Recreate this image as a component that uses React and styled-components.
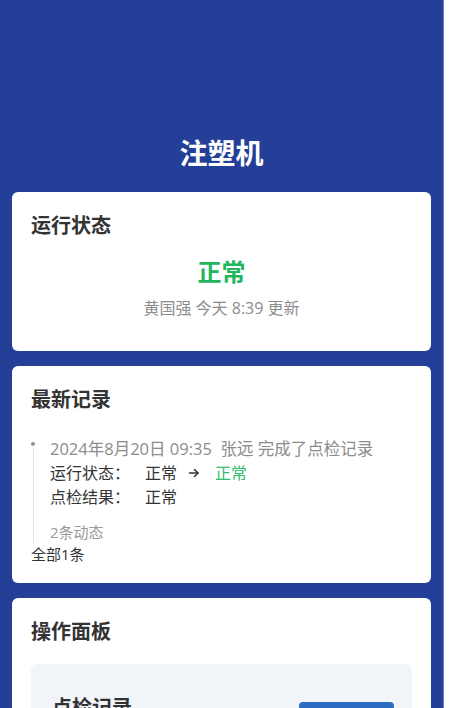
import React from 'react';
import styled, {createGlobalStyle} from 'styled-components';

const GlobalStyle = createGlobalStyle`
  html, body {
    margin: 0;
    padding: 0;
    background: #ffffff;
  }

  body {
    font-family: "Open Sans", "Noto Sans CJK SC", sans-serif;
    color: #333333;
  }
`;

const records = [
    {
        time: '2024年8月20日 09:35',
        user: '张远',
        action: '完成了点检记录',
        status: {from: '正常', to: '正常'},
        result: '正常',
    },
];

const ArrowIcon = () => (
    <svg width="12" height="12" viewBox="0 0 12 12" fill="none" stroke="#333" strokeWidth="1.5"
         strokeLinecap="round" strokeLinejoin="round">
        <path d="M1.5 6h8.5"/>
        <path d="M6.5 2.5L10 6l-3.5 3.5"/>
    </svg>
);

const App = () => {
    return (
        <>
            <GlobalStyle/>
            <Page>
                <Header>注塑机</Header>

                <Card>
                    <CardTitle>运行状态</CardTitle>
                    <StatusBlock>
                        <StatusValue>正常</StatusValue>
                        <StatusMeta>黄国强 今天 8:39 更新</StatusMeta>
                    </StatusBlock>
                </Card>

                <Card>
                    <CardTitle>最新记录</CardTitle>
                    <Timeline>
                        {records.map((item, i) => (
                            <TimelineItem key={i}>
                                <Meta>{item.time}&nbsp;&nbsp;{item.user} {item.action}</Meta>
                                <Field>
                                    <Label>运行状态：</Label>
                                    <span>{item.status.from}</span>
                                    <ArrowWrap><ArrowIcon/></ArrowWrap>
                                    <Value $green>{item.status.to}</Value>
                                </Field>
                                <Field>
                                    <Label>点检结果：</Label>
                                    <span>{item.result}</span>
                                </Field>
                                <Count>2条动态</Count>
                            </TimelineItem>
                        ))}
                    </Timeline>
                    <Total>全部1条</Total>
                </Card>

                <Card>
                    <CardTitle>操作面板</CardTitle>
                    <Panel>
                        <PanelTitle>点检记录</PanelTitle>
                        <PanelButton>去点检</PanelButton>
                    </Panel>
                </Card>
            </Page>
        </>
    );
};

const Page = styled.div`
  width: 444px;
  min-height: 100vh;
  box-sizing: border-box;
  background: #243f98;
  border-right: 1px solid #6f7fb4;
  padding: 133px 12px 20px;
  display: flex;
  flex-direction: column;
  gap: 15px;
`;

const Header = styled.h1`
  margin: 0 0 4px;
  font-size: 28px;
  line-height: 40px;
  font-weight: 700;
  color: #ffffff;
  text-align: center;
`;

const Card = styled.section`
  background: #ffffff;
  border-radius: 6px;
  padding: 20px 19px 18px;
  display: flex;
  flex-direction: column;
`;

const CardTitle = styled.h2`
  margin: 0;
  font-size: 20px;
  line-height: 28px;
  font-weight: 700;
  color: #333333;
`;

const StatusBlock = styled.div`
  display: flex;
  flex-direction: column;
  align-items: center;
  gap: 8px;
  margin: 16px 0 13px;
`;

const StatusValue = styled.div`
  font-size: 24px;
  line-height: 32px;
  font-weight: 700;
  color: #1fb65e;
`;

const StatusMeta = styled.div`
  font-size: 16px;
  line-height: 24px;
  color: #8c8c8c;
`;

const Timeline = styled.ul`
  list-style: none;
  margin: 23px 0 0;
  padding: 0;
`;

const TimelineItem = styled.li`
  position: relative;
  padding-left: 19px;

  &::before {
    content: '';
    position: absolute;
    left: 0;
    top: 5px;
    width: 4px;
    height: 4px;
    border-radius: 50%;
    background: #8c8c8c;
  }

  &::after {
    content: '';
    position: absolute;
    left: 1.5px;
    top: 8px;
    bottom: 0;
    width: 1px;
    background: #e3e3e3;
  }
`;

const Meta = styled.div`
  font-size: 16.5px;
  line-height: 24px;
  color: #8c8c8c;
`;

const Field = styled.div`
  display: flex;
  align-items: center;
  font-size: 16px;
  line-height: 24px;
  color: #333333;
`;

const Label = styled.span`
  margin-right: 15px;
`;

const ArrowWrap = styled.span`
  display: inline-flex;
  margin: 0 15px 0 11px;
`;

const Value = styled.span`
  color: ${p => p.$green ? '#2ebf6d' : '#333333'};
`;

const Count = styled.div`
  margin-top: 12px;
  font-size: 15px;
  line-height: 22px;
  color: #9a9a9a;
`;

const Total = styled.div`
  font-size: 15px;
  line-height: 22px;
  color: #333333;
`;

const Panel = styled.div`
  margin-top: 18px;
  background: #f1f4f8;
  border-radius: 6px;
  padding: 30px 18px 24px 21px;
  display: flex;
  justify-content: space-between;
  align-items: flex-start;
`;

const PanelTitle = styled.div`
  font-size: 20px;
  line-height: 28px;
  font-weight: 700;
  color: #333333;
`;

const PanelButton = styled.button`
  margin-top: 8px;
  width: 95px;
  height: 36px;
  border: none;
  border-radius: 4px;
  background: #2c6dc3;
  color: #ffffff;
  font-family: inherit;
  font-size: 15px;
`;

export default App;
